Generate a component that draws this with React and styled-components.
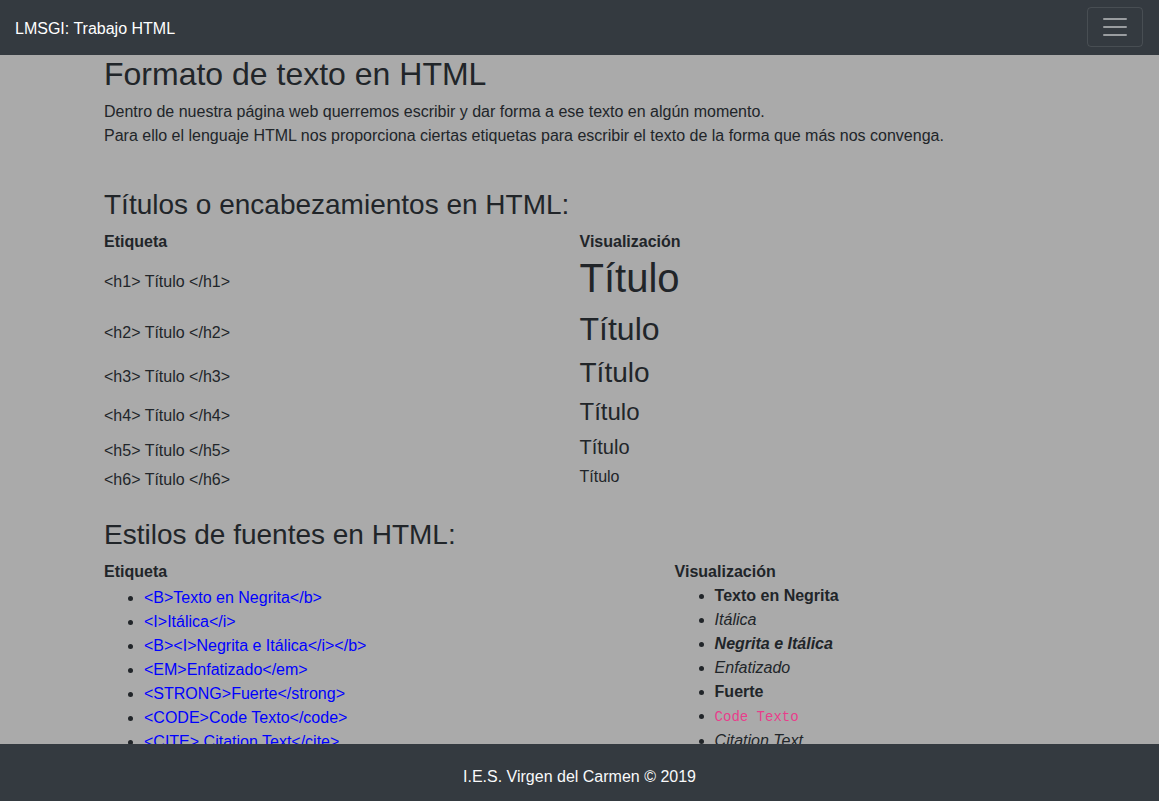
import React from 'react';
import styled, { createGlobalStyle } from 'styled-components';

const GlobalStyle = createGlobalStyle`
  html, body {
    margin: 0;
    padding: 0;
    height: 100%;
    overflow: hidden;
  }
  body {
    font-family: "Liberation Sans", Arial, sans-serif;
    font-size: 16px;
    line-height: 1.5;
    color: #212529;
    background: #aaaaaa;
  }
`;

const Page = styled.div`
  display: flex;
  flex-direction: column;
  height: 100vh;
`;

const Navbar = styled.nav`
  display: flex;
  align-items: center;
  justify-content: space-between;
  height: 55px;
  padding: 0 16px 0 15px;
  background: #343a40;
  flex-shrink: 0;
  box-sizing: border-box;
`;

const Brand = styled.a`
  color: #fff;
  font-size: 16px;
  line-height: 24px;
  text-decoration: none;
  margin-top: 2px;
`;

const Toggler = styled.button`
  display: flex;
  align-items: center;
  justify-content: center;
  width: 56px;
  height: 40px;
  margin-top: -1px;
  padding: 0;
  background: transparent;
  border: 1px solid rgba(255, 255, 255, 0.1);
  border-radius: 4px;
`;

const Main = styled.main`
  flex: 1;
  overflow: hidden;
  padding: 0 104px;
`;

const PageTitle = styled.h2`
  margin: 0 0 7px;
  font-size: 32px;
  font-weight: 500;
  line-height: 1.2;
`;

const Intro = styled.p`
  margin: 0 0 16px;
`;

const Spacer = styled.div`
  height: 24px;
`;

const SectionTitle = styled.h3`
  margin: 0 0 8px;
  font-size: 28px;
  font-weight: 500;
  line-height: 1.2;
`;

const Table = styled.div`
  display: grid;
  grid-template-columns: ${({ $cols }) => $cols};
  align-items: ${({ $align }) => $align || 'start'};
  margin-bottom: 24px;
`;

const HeadCell = styled.div`
  font-weight: bold;
  line-height: 24px;
`;

const Cell = styled.div`
  padding-top: ${({ $offset }) => $offset || 0}px;
`;

const Heading = styled.div`
  margin-bottom: 8px;
  font-size: ${({ $size }) => $size}px;
  font-weight: 500;
  line-height: 1.2;
`;

const List = styled.ul`
  margin: 0;
  padding-left: 40px;
`;

const Item = styled.li`
  line-height: 24px;
`;

const TagLink = styled.span`
  color: #0000ff;
`;

const Code = styled.code`
  font-family: "Liberation Mono", "DejaVu Sans Mono", monospace;
  font-size: 87.5%;
  color: #e83e8c;
`;

const Footer = styled.footer`
  flex-shrink: 0;
  height: 57px;
  padding-top: 21px;
  box-sizing: border-box;
  background: #343a40;
  color: #f8f9fa;
  text-align: center;
  line-height: 24px;
`;

const headings = [
  { tag: 'h1', size: 40 },
  { tag: 'h2', size: 32 },
  { tag: 'h3', size: 28 },
  { tag: 'h4', size: 24 },
  { tag: 'h5', size: 20 },
  { tag: 'h6', size: 16 },
];

const fontTags = [
  '<B>Texto en Negrita</b>',
  '<I>Itálica</i>',
  '<B><I>Negrita e Itálica</i></b>',
  '<EM>Enfatizado</em>',
  '<STRONG>Fuerte</strong>',
  '<CODE>Code Texto</code>',
  '<CITE> Citation Text</cite>',
];

const MenuIcon = () => (
  <svg width="30" height="30" viewBox="0 0 30 30">
    <path
      d="M4 7h22M4 15h22M4 23h22"
      stroke="rgba(255,255,255,0.5)"
      strokeWidth="2"
      strokeLinecap="round"
    />
  </svg>
);

const App = () => {
  return (
    <Page>
      <GlobalStyle />
      <Navbar>
        <Brand href="#">LMSGI: Trabajo HTML</Brand>
        <Toggler aria-label="menu">
          <MenuIcon />
        </Toggler>
      </Navbar>
      <Main>
        <PageTitle>Formato de texto en HTML</PageTitle>
        <Intro>
          Dentro de nuestra página web querremos escribir y dar forma a ese texto en algún momento.
          <br />
          Para ello el lenguaje HTML nos proporciona ciertas etiquetas para escribir el texto de la forma que más nos convenga.
        </Intro>
        <Spacer />

        <SectionTitle>Títulos o encabezamientos en HTML:</SectionTitle>
        <Table $cols="1fr 1fr" $align="center">
          <HeadCell>Etiqueta</HeadCell>
          <HeadCell>Visualización</HeadCell>
          {headings.map((h) => (
            <React.Fragment key={h.tag}>
              <Cell>{`<${h.tag}> Título </${h.tag}>`}</Cell>
              <Heading $size={h.size}>Título</Heading>
            </React.Fragment>
          ))}
        </Table>

        <SectionTitle>Estilos de fuentes en HTML:</SectionTitle>
        <Table $cols="60% 40%">
          <HeadCell>Etiqueta</HeadCell>
          <HeadCell>Visualización</HeadCell>
          <Cell $offset={2}>
            <List>
              {fontTags.map((t) => (
                <Item key={t}>
                  <TagLink>{t}</TagLink>
                </Item>
              ))}
            </List>
          </Cell>
          <Cell>
            <List>
              <Item><b>Texto en Negrita</b></Item>
              <Item><i>Itálica</i></Item>
              <Item><b><i>Negrita e Itálica</i></b></Item>
              <Item><em>Enfatizado</em></Item>
              <Item><strong>Fuerte</strong></Item>
              <Item><Code>Code Texto</Code></Item>
              <Item><cite>Citation Text</cite></Item>
            </List>
          </Cell>
        </Table>
      </Main>
      <Footer>I.E.S. Virgen del Carmen © 2019</Footer>
    </Page>
  );
};

export default App;
